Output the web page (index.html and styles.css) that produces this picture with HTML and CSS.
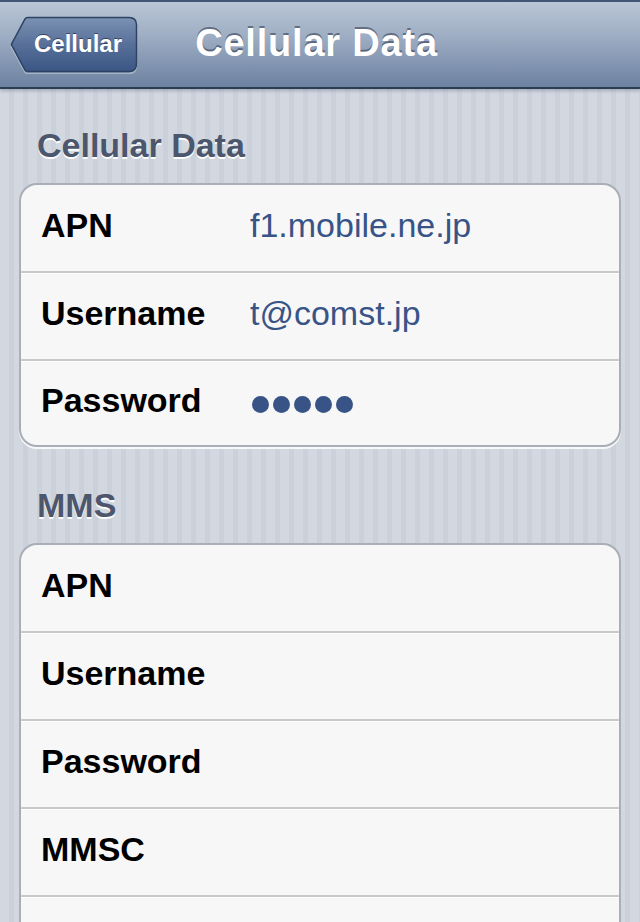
FILE: index.html
```html
<!DOCTYPE html>
<html lang="en">
<head>
<meta charset="utf-8">
<title>Cellular Data</title>
<link rel="stylesheet" href="styles.css">
</head>
<body>
<header class="navbar">
  <a class="back" href="#">
    <svg class="back-shape" viewBox="0 0 128 58" width="128" height="58" aria-hidden="true">
      <defs>
        <linearGradient id="bg" x1="0" y1="0" x2="0" y2="1">
          <stop offset="0" stop-color="#7b92b3"/>
          <stop offset="0.5" stop-color="#587099"/>
          <stop offset="1" stop-color="#3a5685"/>
        </linearGradient>
      </defs>
      <path d="M17.5,2.5 H119 Q126.5,2.5 126.5,10 V48 Q126.5,56.5 119,56.5 H17.5 Q16,56.5 15,55 L1.8,30.5 Q1,29.5 1.8,28.5 L15,4 Q16,2.5 17.5,2.5 Z" fill="none" stroke="rgba(255,255,255,0.35)" stroke-width="1.5" transform="translate(0,1)"/>
      <path d="M17.5,1.5 H119 Q126.5,1.5 126.5,9 V47.5 Q126.5,55.5 119,55.5 H17.5 Q16,55.5 15,54 L1.8,29.5 Q1,28.5 1.8,27.5 L15,3 Q16,1.5 17.5,1.5 Z" fill="url(#bg)" stroke="#2e4364" stroke-width="1.5"/>
    </svg>
    <span class="back-label">Cellular</span>
  </a>
  <h1 class="title">Cellular Data</h1>
  <span class="nav-spacer"></span>
</header>

<main class="content">
  <section class="group">
    <h2 class="group-title">Cellular Data</h2>
    <div class="card">
      <div class="row"><span class="label">APN</span><span class="value">f1.mobile.ne.jp</span></div>
      <div class="row"><span class="label">Username</span><span class="value">t@comst.jp</span></div>
      <div class="row"><span class="label">Password</span><span class="value dots" aria-label="password"><i></i><i></i><i></i><i></i><i></i></span></div>
    </div>
  </section>

  <section class="group">
    <h2 class="group-title">MMS</h2>
    <div class="card">
      <div class="row"><span class="label">APN</span><span class="value"></span></div>
      <div class="row"><span class="label">Username</span><span class="value"></span></div>
      <div class="row"><span class="label">Password</span><span class="value"></span></div>
      <div class="row"><span class="label">MMSC</span><span class="value"></span></div>
      <div class="row row-empty"></div>
    </div>
  </section>
</main>
</body>
</html>
```

FILE: styles.css
```css
html, body {
  margin: 0;
  padding: 0;
}

body {
  width: 640px;
  height: 922px;
  font-family: "Liberation Sans", Arial, Helvetica, sans-serif;
  background-color: #d0d5de;
  background-image: repeating-linear-gradient(90deg, #d2d7e0 0px, #d2d7e0 9px, #cbd1db 9px, #cbd1db 14px);
  overflow: hidden;
}

/* ---------- Navigation bar ---------- */
.navbar {
  display: grid;
  grid-template-columns: 1fr auto 1fr;
  align-items: center;
  height: 85px;
  border-top: 2px solid #3f5576;
  border-bottom: 2px solid #2c3c55;
  background: linear-gradient(180deg, #bac6d6 0%, #a2b1c6 35%, #8597b2 70%, #6c82a2 100%);
  box-shadow: 0 2px 3px rgba(40, 55, 80, 0.25);
  position: relative;
  z-index: 1;
}

.back {
  justify-self: start;
  margin-left: 10px;
  margin-top: 1px;
  display: grid;
  width: 128px;
  height: 58px;
  text-decoration: none;
}

.back-shape,
.back-label {
  grid-area: 1 / 1;
}

.back-label {
  align-self: center;
  padding-left: 24px;
  padding-bottom: 2px;
  font-size: 24px;
  font-weight: bold;
  color: #ffffff;
  text-shadow: 0 -1px 0 rgba(20, 30, 50, 0.6);
}

.title {
  margin: 0;
  padding-right: 7px;
  padding-bottom: 2px;
  font-size: 38px;
  letter-spacing: 0.8px;
  font-weight: bold;
  color: #ffffff;
  text-shadow: 0 -2px 0 rgba(40, 52, 72, 0.55);
  white-space: nowrap;
}

/* ---------- Groups ---------- */
.group + .group {
  padding-top: 2px;
}

.group-title {
  margin: 36px 0 18px;
  padding-left: 37px;
  height: 40px;
  line-height: 40px;
  font-size: 34px;
  font-weight: bold;
  color: #4c566c;
  text-shadow: 0 2px 0 rgba(255, 255, 255, 0.95);
}

.card {
  margin: 0 19px;
  border: 2px solid #a9aeb7;
  border-radius: 18px;
  background: #f7f7f7;
  box-shadow: 0 2px 0 rgba(255, 255, 255, 0.85);
  overflow: hidden;
}

.row {
  box-sizing: border-box;
  display: grid;
  grid-template-columns: 209px 1fr;
  align-items: center;
  height: 88px;
  padding: 0 20px 5px;
  border-top: 2px solid #c9c9c9;
  box-shadow: inset 0 1px 0 #ffffff;
}

.row:first-child {
  height: 86px;
  border-top: 0;
  box-shadow: none;
}

.row:last-child {
  height: 86px;
}

.label {
  font-size: 34px;
  font-weight: bold;
  color: #000000;
  white-space: nowrap;
}

.value {
  font-size: 34px;
  color: #385487;
  white-space: nowrap;
}

.dots {
  display: flex;
  gap: 4px;
  padding-left: 2px;
  padding-top: 8px;
}

.dots i {
  display: block;
  width: 17px;
  height: 17px;
  border-radius: 50%;
  background: #385487;
}
```
